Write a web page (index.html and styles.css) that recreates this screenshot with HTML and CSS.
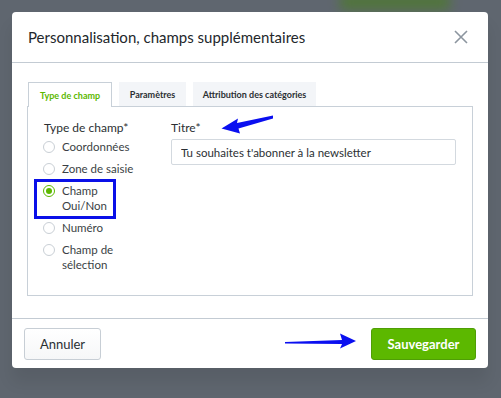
FILE: index.html
```html
<!DOCTYPE html>
<html lang="fr">
    <head>
        <meta charset="UTF-8">
        <meta name="viewport" content="width=device-width, initial-scale=1.0">
        <title>Personnalisation, champs supplémentaires</title>
        <link rel="stylesheet" href="styles.css">
    </head>
    <body>
        <div class="glow"></div>
        <div class="modal">
            <div class="modal-header">
                <h1>Personnalisation, champs supplémentaires</h1>
                <button class="close" aria-label="Fermer">
                    <svg width="14" height="14" viewBox="0 0 14 14">
                        <path d="M1 1 L13 13 M13 1 L1 13" stroke="#8c959f" stroke-width="1.6" fill="none"/>
                    </svg>
                </button>
            </div>
            <div class="modal-body">
                <div class="tabs">
                    <div class="tab active">Type de champ</div>
                    <div class="tab">Paramètres</div>
                    <div class="tab">Attribution des catégories</div>
                </div>
                <div class="panel">
                    <div class="col-type">
                        <div class="label">Type de champ*</div>
                        <div class="radios">
                            <div class="radio"><span class="dot"></span><span class="rtext">Coordonnées</span></div>
                            <div class="radio"><span class="dot"></span><span class="rtext">Zone de saisie</span></div>
                            <div class="radio checked marked"><span class="dot"></span><span class="rtext">Champ<br>Oui/Non</span></div>
                            <div class="radio"><span class="dot"></span><span class="rtext">Numéro</span></div>
                            <div class="radio"><span class="dot"></span><span class="rtext">Champ de<br>sélection</span></div>
                        </div>
                    </div>
                    <div class="col-title">
                        <div class="label">Titre*</div>
                        <input class="field" type="text" value="Tu souhaites t'abonner à la newsletter">
                    </div>
                </div>
            </div>
            <div class="modal-footer">
                <button class="btn cancel">Annuler</button>
                <button class="btn save">Sauvegarder</button>
            </div>
        </div>
        <svg class="arrows" width="501" height="398" viewBox="0 0 501 398">
            <path d="M273 115.5 L237 123 L238 118.5 L221.5 128.5 L240 133.5 L238.5 128.5 L273 118.5 Z" fill="#0a0ff0"/>
            <path d="M285 342 L342 340 L340 333.5 L356 341 L340 348.5 L342 344 L285 343.5 Z" fill="#0a0ff0"/>
        </svg>
    </body>
</html>
```

FILE: styles.css
```css
*, *::before, *::after {
    margin: 0;
    padding: 0;
    box-sizing: border-box;
}
body {
    background: #5f666f;
    padding: 12px;
    font-family: Lato, "Open Sans", sans-serif;
    color: #2b2f33;
    position: relative;
    height: 398px;
    overflow: hidden;
}
.glow {
    position: absolute;
    top: -6px;
    left: 340px;
    width: 110px;
    height: 16px;
    background: #4d7a2c;
    filter: blur(6px);
    opacity: 0.8;
}
.modal {
    position: relative;
    width: 476px;
    background: #fff;
    border-radius: 4px;
    box-shadow: 0 14px 16px rgba(0, 0, 0, 0.08);
}
.modal-header {
    height: 51px;
    padding: 0 16px;
    border-bottom: 1px solid #c3cbd3;
    display: flex;
    align-items: center;
    justify-content: space-between;
}
.modal-header h1 {
    font-size: 15px;
    font-weight: 400;
    color: #23272b;
}
.close {
    border: 0;
    background: none;
    width: 14px;
    height: 14px;
    margin-right: 4px;
    display: flex;
}
.modal-body {
    padding: 19px 15px 22px 15px;
}
.tabs {
    display: flex;
    gap: 7px;
    margin-left: 1px;
}
.tab {
    height: 24px;
    background: #f3f5f8;
    font-size: 9px;
    font-weight: 700;
    color: #2b2f33;
    white-space: nowrap;
    display: flex;
    align-items: center;
    justify-content: center;
}
.tab.active {
    width: 84px;
    background: #fff;
    color: #5cb800;
    border: 1px solid #c8d0d8;
    border-bottom: 0;
    margin-bottom: -1px;
    height: 25px;
    position: relative;
}
.tab:nth-child(2) {
    width: 67px;
}
.tab:nth-child(3) {
    width: 123px;
}
.panel {
    height: 190px;
    border: 1px solid #c8d0d8;
    padding: 13px 15px 0 16px;
    display: flex;
}
.label {
    font-size: 12px;
    line-height: 16px;
    color: #2b2f33;
}
.col-type {
    width: 127px;
}
.radios {
    display: flex;
    flex-direction: column;
    gap: 7px;
    margin-top: 3px;
    margin-left: -1px;
}
.radio {
    display: flex;
    align-items: flex-start;
    position: relative;
    font-size: 11.5px;
    line-height: 15px;
    color: #3a3f44;
}
.dot {
    width: 12px;
    height: 12px;
    border: 1px solid #c9cfd5;
    border-radius: 50%;
    margin-top: 1.5px;
    margin-right: 7px;
    flex-shrink: 0;
    display: flex;
    align-items: center;
    justify-content: center;
}
.rtext {
    white-space: nowrap;
}
.checked .dot {
    border-color: #5cb800;
}
.checked .dot::after {
    content: "";
    width: 6px;
    height: 6px;
    border-radius: 50%;
    background: #5cb800;
}
.marked::before {
    content: "";
    position: absolute;
    left: -9px;
    top: -4.5px;
    width: 82px;
    height: 40px;
    border: 3px solid #0a10e8;
}
.col-title {
    flex: 1;
}
.field {
    display: block;
    width: 285px;
    height: 26px;
    margin-top: 3px;
    border: 1px solid #d3d9df;
    border-radius: 2px;
    padding: 0 9px;
    font-family: Lato, "Open Sans", sans-serif;
    font-size: 11.5px;
    color: #2b2f33;
}
.modal-footer {
    height: 50px;
    border-top: 1px solid #c3cbd3;
    padding: 0 12px;
    display: flex;
    align-items: center;
    justify-content: space-between;
}
.btn {
    height: 32px;
    border-radius: 3px;
    font-family: Lato, "Open Sans", sans-serif;
    font-size: 13px;
}
.cancel {
    width: 77px;
    background: linear-gradient(#fff, #f6f7f8);
    border: 1px solid #c7ced5;
    color: #2b2f33;
}
.save {
    width: 105px;
    background: #5cb800;
    border: 1px solid #4f9e06;
    color: #fff;
    font-weight: 700;
}
.arrows {
    position: absolute;
    top: 0;
    left: 0;
}
```
